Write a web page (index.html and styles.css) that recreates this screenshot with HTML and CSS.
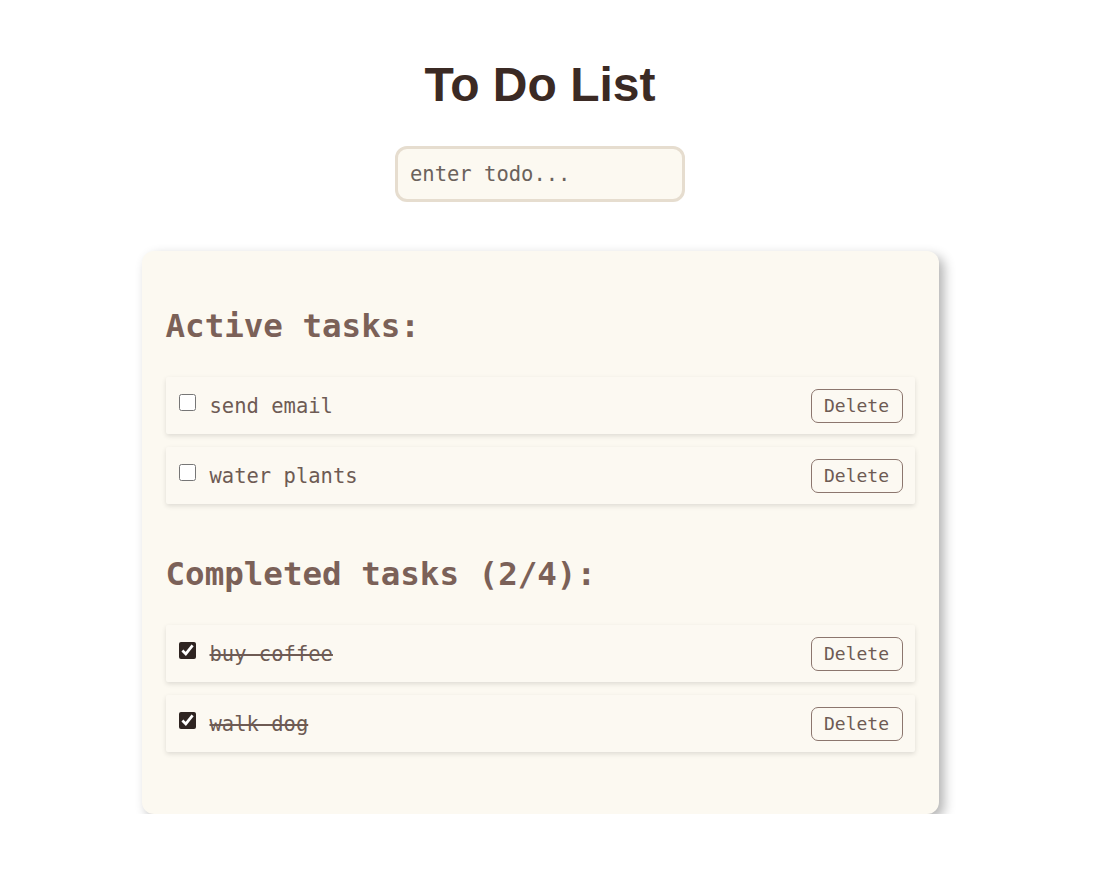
FILE: index.html
```html
<!DOCTYPE html>
<html>
<head>
<meta charset="utf-8">
<title>To Do List</title>
<link rel="stylesheet" href="styles.css">
</head>
<body>
<div class="page">
  <h1 class="title">To Do List</h1>
  <input class="todo-input" type="text" placeholder="enter todo...">
  <div class="card">
    <h2 class="section-title">Active tasks:</h2>
    <ul class="task-list">
      <li class="task">
        <label class="task-label"><input type="checkbox" class="task-check"><span class="task-text">send email</span></label>
        <button class="delete-btn">Delete</button>
      </li>
      <li class="task">
        <label class="task-label"><input type="checkbox" class="task-check"><span class="task-text">water plants</span></label>
        <button class="delete-btn">Delete</button>
      </li>
    </ul>
    <h2 class="section-title section-completed">Completed tasks (2/4):</h2>
    <ul class="task-list">
      <li class="task">
        <label class="task-label"><input type="checkbox" class="task-check" checked><span class="task-text done">buy coffee</span></label>
        <button class="delete-btn">Delete</button>
      </li>
      <li class="task">
        <label class="task-label"><input type="checkbox" class="task-check" checked><span class="task-text done">walk dog</span></label>
        <button class="delete-btn">Delete</button>
      </li>
    </ul>
  </div>
</div>
</body>
</html>
```
FILE: styles.css
```css
html, body {
  margin: 0;
  padding: 0;
  background: #ffffff;
}

.page {
  width: 1080px;
  display: flex;
  flex-direction: column;
  align-items: center;
  padding-top: 57px;
  font-family: "DejaVu Sans Mono", monospace;
}

.title {
  margin: 0;
  font-family: "Liberation Sans", Arial, sans-serif;
  font-weight: bold;
  font-size: 48px;
  line-height: 55px;
  color: #3b2a24;
}

.todo-input {
  margin-top: 34px;
  box-sizing: border-box;
  width: 290px;
  height: 56px;
  padding: 0 12px;
  border: 3px solid #e6ddcf;
  border-radius: 12px;
  background: #fcf9f1;
  font-family: "DejaVu Sans Mono", monospace;
  font-size: 20.5px;
  color: #5f544f;
  outline: none;
}

.todo-input::placeholder {
  color: #6b625c;
}

.card {
  margin-top: 49px;
  box-sizing: border-box;
  width: 797px;
  padding: 55px 24px 62px;
  background: #fcf9f1;
  border-radius: 12px;
  box-shadow: 5px 5px 12px rgba(0, 0, 0, 0.3);
}

.section-title {
  margin: 0 0 31px;
  font-size: 32.5px;
  line-height: 40px;
  font-weight: bold;
  color: #7b6158;
}

.section-completed {
  margin-top: 50px;
}

.task-list {
  list-style: none;
  margin: 0;
  padding: 0;
  display: flex;
  flex-direction: column;
  gap: 13px;
}

.task {
  display: flex;
  align-items: center;
  justify-content: space-between;
  height: 57px;
  padding: 0 12px 0 13px;
  background: #fcf9f2;
  box-shadow: 0 2px 5px rgba(0, 0, 0, 0.12);
  border-radius: 2px;
}

.task-label {
  display: flex;
  align-items: center;
  gap: 14px;
}

.task-check {
  margin: 0 0 6px;
  width: 17px;
  height: 17px;
  accent-color: #2e2421;
}

.task-text {
  font-size: 20.5px;
  color: #6e5b54;
}

.task-text.done {
  text-decoration: line-through;
}

.delete-btn {
  box-sizing: border-box;
  width: 92px;
  height: 34px;
  padding: 0;
  border: 1px solid #8c766e;
  border-radius: 7px;
  background: #fcf9f2;
  font-family: "DejaVu Sans Mono", monospace;
  font-size: 18px;
  color: #6e5b54;
}
```
